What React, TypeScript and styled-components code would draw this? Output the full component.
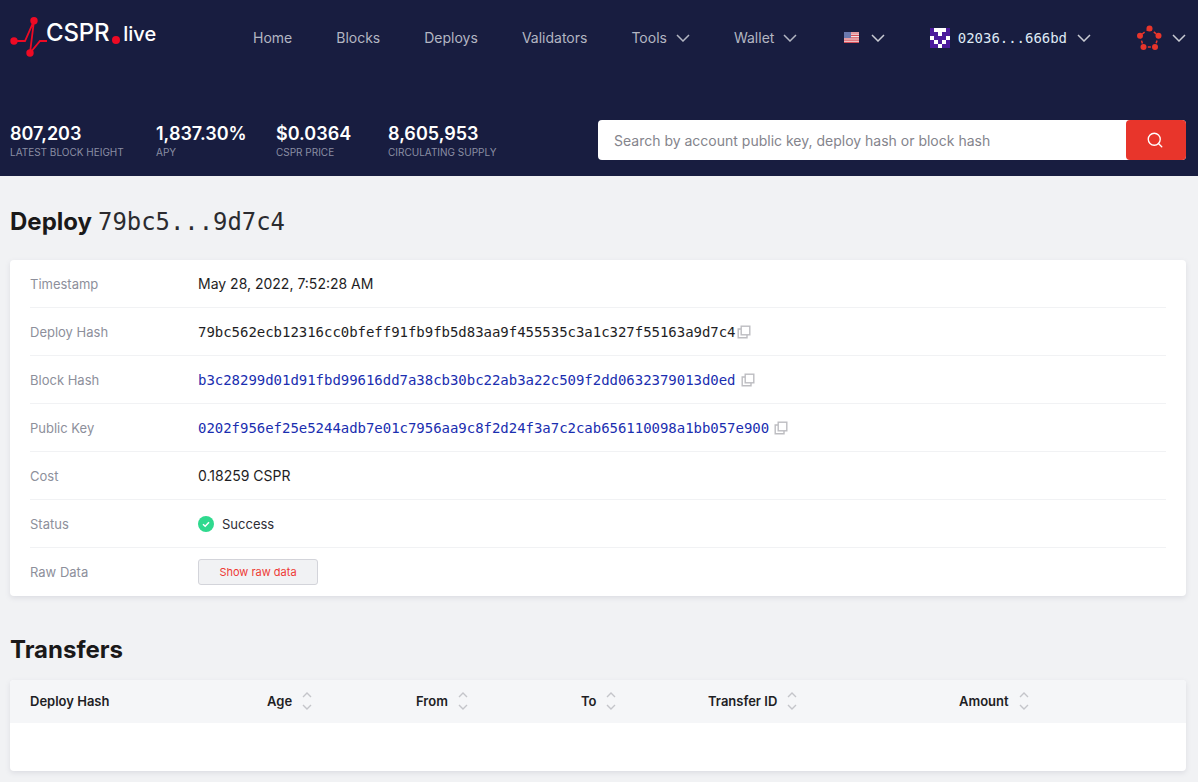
import styled, { createGlobalStyle } from 'styled-components'
import { Search } from 'lucide-react'

const GlobalStyle = createGlobalStyle`
  * {
    box-sizing: border-box;
  }

  html,
  body {
    margin: 0;
    padding: 0;
    background: #f1f2f4;
    font-family: Inter, 'Noto Sans', sans-serif;
    color: #1a1919;
  }
`

const mono = `'DejaVu Sans Mono', 'Liberation Mono', monospace`

const TopBar = styled.header`
  display: flex;
  flex-direction: column;
  height: 176px;
  padding: 0 12px 0 10px;
  background: #181d40;
`

const NavRow = styled.div`
  display: flex;
  align-items: center;
  height: 75px;
`

const Logo = styled.div`
  display: flex;
  align-items: center;
  width: 243px;
  height: 75px;
  color: #fff;
`

const LogoMark = styled.svg`
  flex: none;
  align-self: flex-start;
  width: 38px;
  height: 42px;
  margin-top: 16px;
`

const LogoName = styled.span`
  margin: -9px 0 0 -2px;
  font-size: 24px;
  font-weight: 500;
  line-height: 30px;
  letter-spacing: -0.2px;
`

const LogoDot = styled.span`
  width: 8px;
  height: 8px;
  margin: 5px 3px 0 3px;
  border-radius: 50%;
  background: #ee0a24;
`

const LogoSuffix = styled.span`
  margin-top: -8px;
  font-size: 20px;
  font-weight: 500;
  line-height: 30px;
`

const NavLinks = styled.nav`
  display: flex;
  align-items: center;
  gap: 44px;
`

const NavLink = styled.span`
  display: flex;
  align-items: center;
  gap: 9px;
  font-size: 14px;
  line-height: 20px;
  color: #b3b6c2;
`

const Chevron = styled.svg`
  flex: none;
  width: 14px;
  height: 8px;
  margin-top: 1px;
`

const NavRight = styled.div`
  display: flex;
  flex: 1;
  align-items: center;
  justify-content: flex-end;
`

const NavMenu = styled.div<{ $gap: number; $left: number }>`
  display: flex;
  align-items: center;
  gap: ${p => p.$gap}px;
  margin-left: ${p => p.$left}px;
  color: #c9cbd3;
`

const AccountKey = styled.span`
  margin-right: 2px;
  font-family: ${mono};
  font-size: 14px;
  letter-spacing: -0.03px;
  color: #dfe9f5;
`

const StatsRow = styled.div`
  display: flex;
  align-items: flex-end;
  justify-content: space-between;
  padding-top: 45px;
`

const Stats = styled.div`
  display: grid;
  grid-template-columns: 146px 120px 112px auto;
`

const Stat = styled.div`
  display: flex;
  flex-direction: column;
`

const StatValue = styled.span`
  font-size: 18px;
  font-weight: 600;
  line-height: 20px;
  color: #fff;
`

const StatLabel = styled.span`
  margin-top: 1px;
  font-size: 10px;
  line-height: 14px;
  color: #8a8ea3;
`

const SearchBox = styled.div`
  display: flex;
  width: 588px;
  height: 40px;
  margin-bottom: -1px;
  border-radius: 4px;
  background: #fff;
`

const SearchText = styled.div`
  display: flex;
  flex: 1;
  align-items: center;
  padding-left: 16px;
  font-size: 14px;
  color: #84848c;
`

const SearchButton = styled.button`
  display: flex;
  align-items: center;
  justify-content: center;
  width: 60px;
  padding: 0 2px 0 0;
  border: 0;
  border-radius: 4px;
  background: #e8352b;
  color: #fff;
`

const Main = styled.main`
  padding: 0 12px 11px 10px;
`

const PageTitle = styled.h1`
  display: flex;
  align-items: baseline;
  gap: 6px;
  height: 84px;
  margin: 0;
  padding-top: 30px;
  font-size: 24px;
  font-weight: 700;
  line-height: 32px;
`

const TitleHash = styled.span`
  font-family: ${mono};
  font-size: 23.9px;
  font-weight: 400;
  color: #2b2b2f;
`

const Card = styled.section`
  border-radius: 4px;
  background: #fff;
  box-shadow: 0 2px 5px rgba(127, 128, 149, 0.18);
`

const DetailCard = styled(Card)`
  padding: 0 20px;
`

const Row = styled.div`
  display: flex;
  align-items: center;
  height: 48px;
  padding-bottom: 1px;
  border-bottom: 1px solid #f1f2f4;

  &:last-child {
    border-bottom: 0;
  }
`

const RowLabel = styled.div`
  flex: none;
  width: 168px;
  padding-top: 1px;
  font-size: 13px;
  color: #8d8f9b;
`

const RowValue = styled.div`
  display: flex;
  align-items: center;
  padding-top: 1px;
  font-size: 14px;
  color: #1e1e24;
`

const HashText = styled.span<{ $link?: boolean }>`
  font-family: ${mono};
  font-size: 14px;
  letter-spacing: -0.03px;
  color: ${p => (p.$link ? '#1a2eb0' : '#1e1e24')};
`

const CopyIcon = styled.svg<{ $gap: number }>`
  flex: none;
  width: 14px;
  height: 14px;
  margin-left: ${p => p.$gap}px;
`

const SuccessBadge = styled.svg`
  flex: none;
  width: 16px;
  height: 16px;
  margin-right: 8px;
`

const StatusText = styled.span`
  font-size: 13px;
  color: #2d2d35;
`

const RawButton = styled.button`
  width: 120px;
  height: 26px;
  padding: 0;
  border: 1px solid #d3d4da;
  border-radius: 3px;
  background: #f1f2f4;
  font-family: Inter, sans-serif;
  font-size: 11px;
  color: #ee3a34;
`

const SectionTitle = styled.h2`
  height: 84px;
  margin: 0;
  padding-top: 39px;
  font-size: 24px;
  font-weight: 700;
  line-height: 30px;
`

const TableCard = styled(Card)`
  height: 91px;
`

const TableHead = styled.div`
  display: grid;
  grid-template-columns: 237px 149px 165px 127px 251px 1fr;
  align-items: center;
  height: 43px;
  padding-left: 20px;
  border-radius: 4px 4px 0 0;
  background: #f5f6f8;
`

const HeadCell = styled.div`
  display: flex;
  align-items: center;
  gap: 10px;
  padding-bottom: 1px;
  font-size: 13px;
  font-weight: 600;
  color: #1e1e24;
`

const SortArrows = styled.span`
  display: flex;
  flex-direction: column;
  gap: 6px;
`

const details = [
  { label: 'Deploy Hash', hash: '79bc562ecb12316cc0bfeff91fb9fb5d83aa9f455535c3a1c327f55163a9d7c4', gap: 1 },
  { label: 'Block Hash', hash: 'b3c28299d01d91fbd99616dd7a38cb30bc22ab3a22c509f2dd0632379013d0ed', gap: 5, link: true },
  { label: 'Public Key', hash: '0202f956ef25e5244adb7e01c7956aa9c8f2d24f3a7c2cab656110098a1bb057e900', gap: 5, link: true },
]

const columns = ['Age', 'From', 'To', 'Transfer ID', 'Amount']

// 5x5 account identicon, 1 = purple cell
const identicon = [
  [1, 0, 0, 0, 1],
  [1, 1, 0, 1, 1],
  [0, 1, 1, 1, 0],
  [1, 0, 1, 0, 1],
  [1, 1, 0, 1, 1],
]

function Caret() {
  return (
    <Chevron viewBox="0 0 14 8" fill="none" stroke="currentColor" strokeWidth="1.5">
      <path d="M1 1L7 7L13 1" />
    </Chevron>
  )
}

function Copy({ gap }: { gap: number }) {
  return (
    <CopyIcon $gap={gap} viewBox="0 0 14 14" fill="none" stroke="#bdbdc1" strokeWidth="1.4">
      <rect x="4.2" y="1.2" width="8.6" height="8.6" />
      <path d="M4 4H1.2v8.8H10V10" />
    </CopyIcon>
  )
}

function Sort() {
  return (
    <SortArrows>
      <svg width="10" height="6" viewBox="0 0 10 6" fill="none" stroke="#c4c5ca" strokeWidth="1.4">
        <path d="M1 5L5 1L9 5" />
      </svg>
      <svg width="10" height="6" viewBox="0 0 10 6" fill="none" stroke="#c4c5ca" strokeWidth="1.4">
        <path d="M1 1L5 5L9 1" />
      </svg>
    </SortArrows>
  )
}

export default function App() {
  return (
    <>
      <GlobalStyle />
      <TopBar>
        <NavRow>
          <Logo>
            <LogoMark viewBox="0 0 38 42" fill="none">
              <path d="M4 25H15L24 4.7L20 37L30 25H37" stroke="#ee0a24" strokeWidth="1.8" />
              <circle cx="4" cy="25" r="3.7" fill="#ee0a24" />
              <circle cx="24" cy="4.7" r="3.7" fill="#ee0a24" />
              <circle cx="20" cy="37" r="3.7" fill="#ee0a24" />
            </LogoMark>
            <LogoName>CSPR</LogoName>
            <LogoDot />
            <LogoSuffix>live</LogoSuffix>
          </Logo>
          <NavLinks>
            <NavLink>Home</NavLink>
            <NavLink>Blocks</NavLink>
            <NavLink>Deploys</NavLink>
            <NavLink>Validators</NavLink>
            <NavLink>
              Tools <Caret />
            </NavLink>
            <NavLink>
              Wallet <Caret />
            </NavLink>
          </NavLinks>
          <NavRight>
            <NavMenu $gap={12} $left={0}>
              <svg width="15" height="11" viewBox="0 0 15 11">
                <rect width="15" height="11" fill="#f2e6e8" />
                <path d="M0 1h15M0 3.4h15M0 5.8h15M0 8.2h15M0 10.4h15" stroke="#d8505a" strokeWidth="1.2" />
                <rect width="7" height="6" fill="#6a78ae" />
              </svg>
              <Caret />
            </NavMenu>
            <NavMenu $gap={8} $left={45}>
              <svg width="20" height="20" viewBox="0 0 5 5" shapeRendering="crispEdges">
                <rect width="5" height="5" fill="#fff" />
                {identicon.map((row, y) =>
                  row.map((cell, x) =>
                    cell ? <rect key={`${x}-${y}`} x={x} y={y} width="1" height="1" fill="#4b1a9c" /> : null
                  )
                )}
              </svg>
              <AccountKey>02036...666bd</AccountKey>
              <Caret />
            </NavMenu>
            <NavMenu $gap={10} $left={46}>
              <svg width="25" height="26" viewBox="0 0 25 26" fill="none">
                <path d="M12.5 3.5L21.5 10.7L18 22H6.5L3 10.7Z" stroke="#e8352b" strokeWidth="1.5" strokeDasharray="3 2.5" />
                <circle cx="12.5" cy="3.5" r="3" fill="#e8352b" />
                <circle cx="21.5" cy="10.7" r="3" fill="#e8352b" />
                <circle cx="18" cy="22" r="3" fill="#e8352b" />
                <circle cx="6.5" cy="22" r="3" fill="#e8352b" />
                <circle cx="3" cy="10.7" r="3" fill="#e8352b" />
              </svg>
              <Caret />
            </NavMenu>
          </NavRight>
        </NavRow>
        <StatsRow>
          <Stats>
            <Stat>
              <StatValue>807,203</StatValue>
              <StatLabel>LATEST BLOCK HEIGHT</StatLabel>
            </Stat>
            <Stat>
              <StatValue>1,837.30%</StatValue>
              <StatLabel>APY</StatLabel>
            </Stat>
            <Stat>
              <StatValue>$0.0364</StatValue>
              <StatLabel>CSPR PRICE</StatLabel>
            </Stat>
            <Stat>
              <StatValue>8,605,953</StatValue>
              <StatLabel>CIRCULATING SUPPLY</StatLabel>
            </Stat>
          </Stats>
          <SearchBox>
            <SearchText>Search by account public key, deploy hash or block hash</SearchText>
            <SearchButton>
              <Search size={18} strokeWidth={1.8} />
            </SearchButton>
          </SearchBox>
        </StatsRow>
      </TopBar>
      <Main>
        <PageTitle>
          Deploy <TitleHash>79bc5...9d7c4</TitleHash>
        </PageTitle>
        <DetailCard>
          <Row>
            <RowLabel>Timestamp</RowLabel>
            <RowValue>May 28, 2022, 7:52:28 AM</RowValue>
          </Row>
          {details.map(item => (
            <Row key={item.label}>
              <RowLabel>{item.label}</RowLabel>
              <RowValue>
                <HashText $link={item.link}>{item.hash}</HashText>
                <Copy gap={item.gap} />
              </RowValue>
            </Row>
          ))}
          <Row>
            <RowLabel>Cost</RowLabel>
            <RowValue>0.18259 CSPR</RowValue>
          </Row>
          <Row>
            <RowLabel>Status</RowLabel>
            <RowValue>
              <SuccessBadge viewBox="0 0 16 16">
                <circle cx="8" cy="8" r="8" fill="#2fd98e" />
                <path d="M5 8.2L7.2 10.2L11 6.2" fill="none" stroke="#fff" strokeWidth="1.5" />
              </SuccessBadge>
              <StatusText>Success</StatusText>
            </RowValue>
          </Row>
          <Row>
            <RowLabel>Raw Data</RowLabel>
            <RowValue>
              <RawButton>Show raw data</RawButton>
            </RowValue>
          </Row>
        </DetailCard>
        <SectionTitle>Transfers</SectionTitle>
        <TableCard>
          <TableHead>
            <HeadCell>Deploy Hash</HeadCell>
            {columns.map(name => (
              <HeadCell key={name}>
                {name}
                <Sort />
              </HeadCell>
            ))}
          </TableHead>
        </TableCard>
      </Main>
    </>
  )
}
